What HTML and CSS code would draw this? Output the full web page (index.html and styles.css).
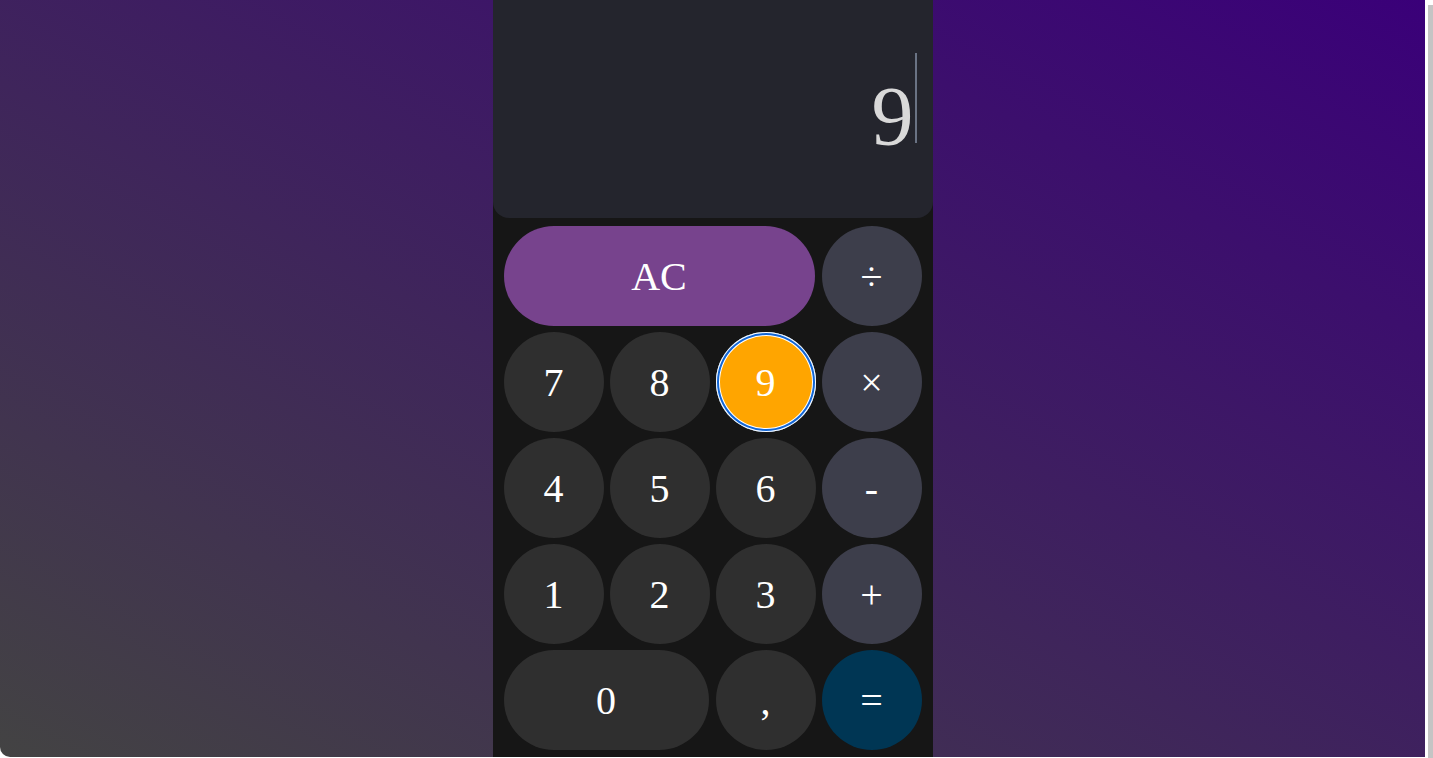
FILE: index.html
```html
<!DOCTYPE html>
<html lang="en">
<head>
<meta charset="utf-8">
<title>Calculator</title>
<link rel="stylesheet" href="styles.css">
</head>
<body>
<div class="window">
  <main class="page">
    <div class="calc">
      <div class="display">
        <span class="value">9</span><span class="caret"></span>
      </div>
      <div class="keys">
        <button class="key key-ac wide3">AC</button>
        <button class="key key-op">÷</button>
        <button class="key">7</button>
        <button class="key">8</button>
        <button class="key key-active">9</button>
        <button class="key key-op">×</button>
        <button class="key">4</button>
        <button class="key">5</button>
        <button class="key">6</button>
        <button class="key key-op">-</button>
        <button class="key">1</button>
        <button class="key">2</button>
        <button class="key">3</button>
        <button class="key key-op">+</button>
        <button class="key wide2">0</button>
        <button class="key">,</button>
        <button class="key key-eq">=</button>
      </div>
    </div>
  </main>
  <div class="rail"><div class="thumb"></div></div>
</div>
</body>
</html>
```
FILE: styles.css
```css
* { box-sizing: border-box; }
html, body {
  margin: 0;
  padding: 0;
  height: 758px;
  overflow: hidden;
  background: #ffffff;
  font-family: "Liberation Serif", "Times New Roman", serif;
}
.window {
  display: flex;
  height: 758px;
}
.page {
  flex: 0 0 1425px;
  height: 757px;
  background: linear-gradient(to top right, #434343, #3a0079);
  border-bottom-left-radius: 10px;
  display: flex;
  justify-content: center;
  overflow: hidden;
}
.rail {
  flex: 1;
  padding: 5px 0 0 3px;
  background: #ffffff;
}
.thumb {
  height: 100%;
  background: #c4c4c4;
}
.calc {
  width: 440px;
  height: 757px;
  background: #161616;
  display: flex;
  flex-direction: column;
}
.display {
  height: 218px;
  background: #24252d;
  border-radius: 0 0 16px 16px;
  display: flex;
  justify-content: flex-end;
  align-items: flex-start;
  padding-right: 16px;
}
.value {
  font-size: 84px;
  line-height: 84px;
  margin-top: 75px;
  color: #d9d9d9;
}
.caret {
  width: 2px;
  height: 90px;
  margin-top: 53px;
  margin-left: 1px;
  background: #6a7384;
}
.keys {
  display: grid;
  grid-template-columns: repeat(4, 100px);
  grid-auto-rows: 100px;
  gap: 6px;
  padding: 8px 11px 0 11px;
}
.key {
  border: none;
  border-radius: 50px;
  background: #2f2f2f;
  color: #ffffff;
  font-family: "Liberation Serif", "Times New Roman", serif;
  font-size: 40px;
  padding: 0;
  display: flex;
  align-items: center;
  justify-content: center;
}
.wide3 { grid-column: span 3; width: 311px; }
.wide2 { grid-column: span 2; width: 205px; }
.key-ac { background: #77438d; }
.key-op { background: #3d3e4b; }
.key-eq { background: #003654; }
.key-active {
  background: #ffa500;
  box-shadow: inset 0 0 0 1px #ffffff, inset 0 0 0 3px #1266d6, inset 0 0 0 4px #ffffff;
}
```
